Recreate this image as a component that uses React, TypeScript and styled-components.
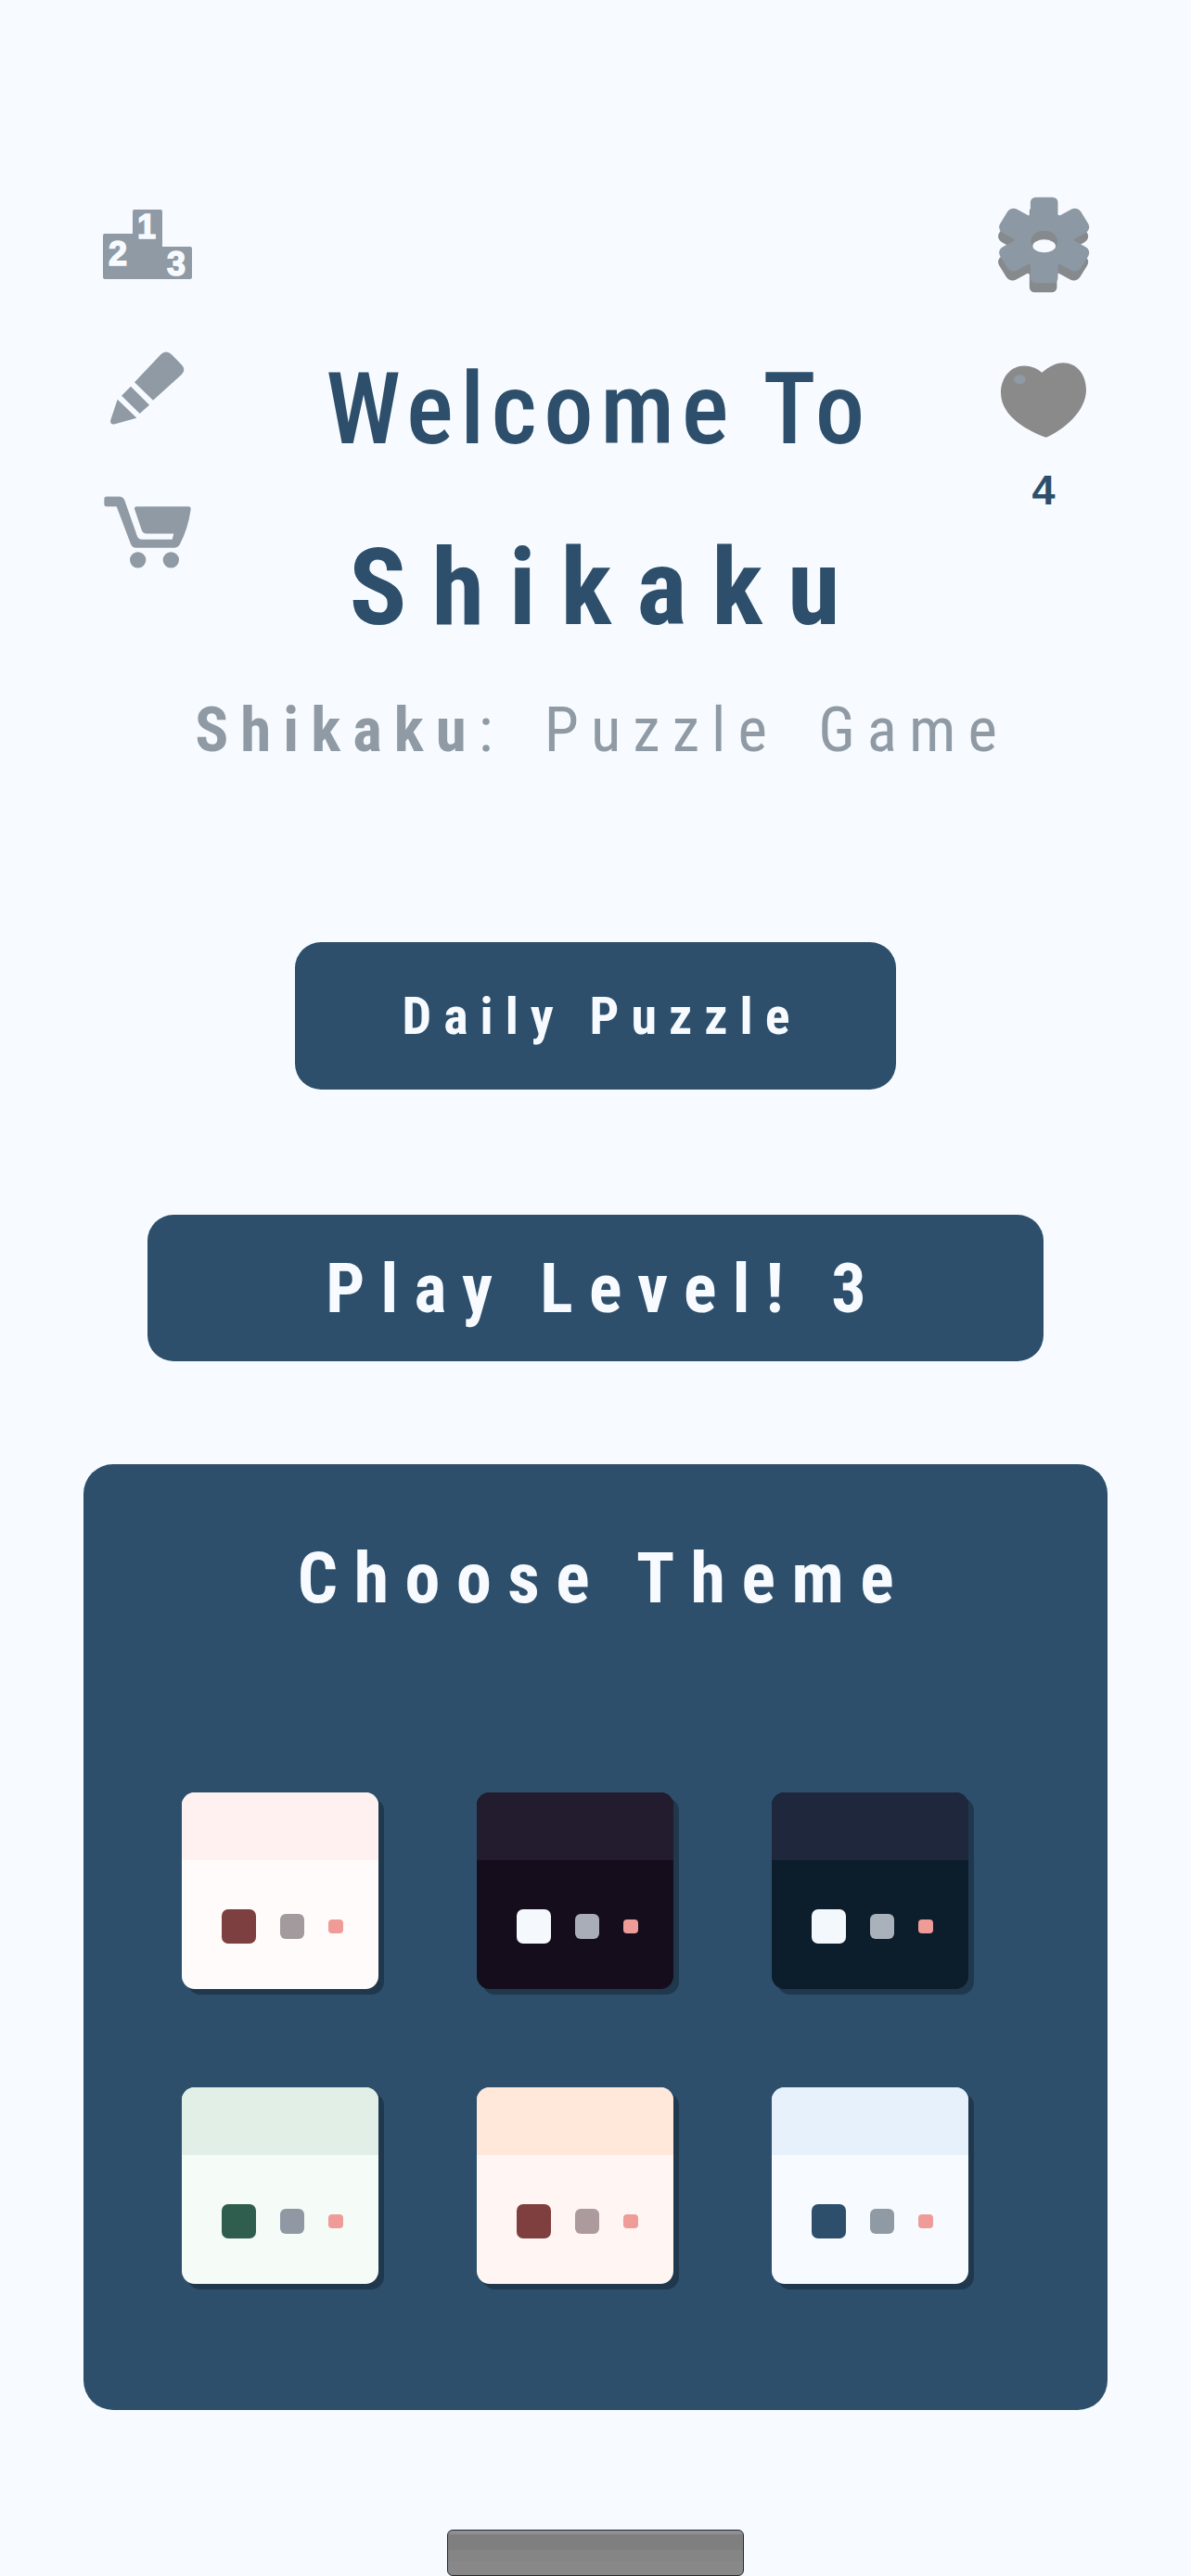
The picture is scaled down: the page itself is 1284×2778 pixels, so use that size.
import styled, { createGlobalStyle } from "styled-components";

const primary = "#2d4f6b";
const muted = "#8f9aa5";
const paper = "#f7fbff";
const font = `"Roboto", "Liberation Sans", sans-serif`;

const GlobalStyle = createGlobalStyle`
  html, body {
    margin: 0;
    padding: 0;
    background: ${paper};
  }
  * {
    box-sizing: border-box;
  }
`;

const Page = styled.main`
  width: 1284px;
  height: 2778px;
  display: flex;
  flex-direction: column;
  align-items: center;
  overflow: hidden;
  font-family: ${font};
  font-stretch: 75%;
  background: ${paper};
`;

const Header = styled.header`
  width: 100%;
  height: 822px;
  display: grid;
  grid-template-columns: 210px minmax(0, 1fr) 209px;
  padding-top: 212px;
`;

const LeftIcons = styled.div`
  display: flex;
  flex-direction: column;
  align-items: flex-start;
  padding: 14px 0 0 111px;
`;

const RightIcons = styled.div`
  display: flex;
  flex-direction: column;
  align-items: center;
  padding-right: 109px;
`;

const IconLink = styled.div<{ $gap?: number; $indent?: number }>`
  display: flex;
  margin-top: ${(p) => p.$gap ?? 0}px;
  margin-left: ${(p) => p.$indent ?? 0}px;
`;

const Lives = styled.span`
  margin-top: 34px;
  font-family: "Liberation Sans", sans-serif;
  font-weight: 700;
  font-size: 45px;
  line-height: 45px;
  color: ${primary};
`;

const TitleBlock = styled.div`
  display: flex;
  flex-direction: column;
  align-items: center;
  padding-top: 178px;
`;

const Welcome = styled.h1`
  margin: 0;
  padding-left: 6px;
  font-size: 107px;
  line-height: 104px;
  font-weight: 500;
  letter-spacing: 7.5px;
  color: ${primary};
  white-space: nowrap;
`;

const GameName = styled.h2`
  margin: 84px 0 0;
  padding-left: 24px;
  font-size: 115px;
  line-height: 112px;
  font-weight: 700;
  letter-spacing: 26.8px;
  color: ${primary};
`;

const Subtitle = styled.p`
  margin: 64px 0 0;
  padding-left: 13px;
  font-size: 67px;
  line-height: 66px;
  font-weight: 400;
  letter-spacing: 13px;
  word-spacing: 14px;
  white-space: nowrap;
  color: ${muted};

  b {
    font-weight: 700;
  }
`;

const ActionButton = styled.button<{ $width: number; $height: number; $size: number; $spacing: number; $top: number }>`
  display: block;
  width: ${(p) => p.$width}px;
  height: ${(p) => p.$height}px;
  margin: ${(p) => p.$top}px 0 0;
  padding: 0 0 0 ${(p) => p.$spacing + 1}px;
  border: 0;
  border-radius: 28px;
  background: ${primary};
  color: ${paper};
  font-family: ${font};
  font-stretch: 75%;
  font-weight: 700;
  font-size: ${(p) => p.$size}px;
  letter-spacing: ${(p) => p.$spacing}px;
  white-space: nowrap;
`;

const ThemePanel = styled.section`
  width: 1104px;
  height: 1020px;
  margin-top: 111px;
  padding: 86px 0 0 106px;
  border-radius: 32px;
  background: ${primary};
`;

const PanelTitle = styled.h3`
  margin: 0 0 0 -106px;
  padding-left: 18px;
  text-align: center;
  font-size: 76px;
  line-height: 75px;
  font-weight: 700;
  letter-spacing: 17.5px;
  color: ${paper};
`;

const ThemeGrid = styled.div`
  display: grid;
  grid-template-columns: repeat(3, 212px);
  grid-auto-rows: 212px;
  gap: 106px;
  margin-top: 193px;
`;

const ThemeCard = styled.button<{ $bg: string }>`
  display: flex;
  flex-direction: column;
  padding: 0;
  border: 0;
  border-radius: 14px;
  overflow: hidden;
  background: ${(p) => p.$bg};
  box-shadow: 6px 6px 0 #1f384d;
`;

const ThemeHead = styled.div<{ $bg: string }>`
  width: 100%;
  height: 73px;
  background: ${(p) => p.$bg};
`;

const SwatchRow = styled.div`
  flex: 1;
  width: 100%;
  display: flex;
  align-items: center;
  justify-content: center;
  gap: 26px;
  padding: 4px 0 0 5px;
`;

const Swatch = styled.span<{ $w: number; $h: number; $bg: string; $r: number }>`
  width: ${(p) => p.$w}px;
  height: ${(p) => p.$h}px;
  border-radius: ${(p) => p.$r}px;
  background: ${(p) => p.$bg};
`;

const HomeBar = styled.div`
  width: 320px;
  height: 50px;
  margin-top: auto;
  border: 1px solid #1e2b42;
  border-radius: 6px;
  background: linear-gradient(#8f8f8f 0 4px, #7f7f7f 4px 21px, #858585 21px 33px, #888888 33px);
`;

const themes = [
  { head: "#fff1f0", body: "#fffbfa", main: "#7d3f3f", mid: "#a29a9d" },
  { head: "#221c2e", body: "#150d1c", main: "#f5f8fc", mid: "#a8adb8" },
  { head: "#1e273b", body: "#0c1d2b", main: "#f3f8fd", mid: "#a9b1bb" },
  { head: "#e1efe6", body: "#f5fbf7", main: "#2f5e4f", mid: "#9099a3" },
  { head: "#ffe8da", body: "#fff6f3", main: "#7f3f3f", mid: "#ac9a9d" },
  { head: "#e6f1fb", body: "#f7fbff", main: "#2d4f6b", mid: "#8f9aa5" },
];

function PodiumIcon() {
  const digit = {
    fill: paper,
    stroke: paper,
    strokeWidth: 1.5,
    fontFamily: "Liberation Sans, sans-serif",
    fontWeight: 700,
    fontSize: 36,
    textAnchor: "middle" as const,
  };
  return (
    <svg width="96" height="75" viewBox="0 0 96 75" overflow="visible">
      <path fill={muted} d="M34 0h28a2 2 0 0 1 2 2v38h30a2 2 0 0 1 2 2v31a2 2 0 0 1-2 2H2a2 2 0 0 1-2-2V28a2 2 0 0 1 2-2h30V2a2 2 0 0 1 2-2z" />
      <text x="47" y="31" {...digit}>1</text>
      <text x="16" y="60" {...digit}>2</text>
      <text x="79" y="71" {...digit}>3</text>
    </svg>
  );
}

function PencilIcon() {
  return (
    <svg width="80" height="79" viewBox="117 597 240 237">
      <path fill={muted} d="M195 697 L280 607 Q297 590 315 607 L347 640 Q363 656 347 672 L255 755 Z" />
      <path fill={muted} d="M183 710 L243 770 L212 798 L153 740 Z" />
      <path fill={muted} d="M140 752 L202 812 L132 832 Q114 836 118 818 Z" />
    </svg>
  );
}

function CartIcon() {
  return (
    <svg width="94" height="78" viewBox="96 1065 282 233">
      <path
        fill={muted}
        d="M103 1066 H145 Q158 1066 163 1078 L203 1192 Q207 1205 220 1205 H317 L322 1186 H235 Q222 1186 218 1174 L195 1106 Q193 1098 203 1098 H370 Q378 1098 377 1108 Q368 1170 342 1220 Q336 1232 322 1232 H200 Q188 1232 183 1220 L137 1098 H105 Q97 1098 97 1090 V1074 Q97 1066 103 1066 Z"
      />
      <circle fill={muted} cx="206" cy="1271" r="26" />
      <circle fill={muted} cx="313" cy="1271" r="26" />
    </svg>
  );
}

function GearShape({ fill, dx, dy }: { fill: string; dx: number; dy: number }) {
  return (
    <g fill={fill} transform={`translate(${dx} ${dy})`}>
      <circle cx="258" cy="205" r="92" />
      <rect x="216" y="67" width="84" height="278" rx="16" />
      {[60, 120].map((angle) => (
        <rect key={angle} x="214" y="62" width="88" height="286" rx="22" transform={`rotate(${angle} 258 205)`} />
      ))}
    </g>
  );
}

function GearIcon() {
  return (
    <svg width="100" height="104" viewBox="114 65 284 312" preserveAspectRatio="none" overflow="visible">
      <GearShape fill="#878a8d" dx={-3} dy={30} />
      <GearShape fill="#8c98a3" dx={0} dy={0} />
      <ellipse cx="258" cy="210" rx="41" ry="35" fill="#878a8d" />
      <ellipse cx="258" cy="225" rx="35" ry="21" fill={paper} />
    </svg>
  );
}

function HeartIcon() {
  return (
    <svg width="92" height="81" viewBox="117 603 276 242">
      <path
        fill="#8a8a8a"
        d="M250 635 C275 612 300 603 318 603 C362 603 393 640 393 690 C393 760 320 820 263 845 C210 825 117 780 117 700 C117 650 150 613 192 613 C215 613 235 622 250 635 Z"
      />
      <ellipse cx="178" cy="657" rx="19" ry="15" fill={muted} />
    </svg>
  );
}

export default function App() {
  return (
    <Page>
      <GlobalStyle />
      <Header>
        <LeftIcons>
          <IconLink>
            <PodiumIcon />
          </IconLink>
          <IconLink $gap={78} $indent={8}>
            <PencilIcon />
          </IconLink>
          <IconLink $gap={77} $indent={1}>
            <CartIcon />
          </IconLink>
        </LeftIcons>
        <TitleBlock>
          <Welcome>Welcome To</Welcome>
          <GameName>Shikaku</GameName>
          <Subtitle>
            <b>Shikaku</b>: Puzzle Game
          </Subtitle>
        </TitleBlock>
        <RightIcons>
          <IconLink>
            <GearIcon />
          </IconLink>
          <IconLink $gap={75}>
            <HeartIcon />
          </IconLink>
          <Lives>4</Lives>
        </RightIcons>
      </Header>
      <ActionButton $width={648} $height={159} $size={56} $spacing={13} $top={194}>
        Daily Puzzle
      </ActionButton>
      <ActionButton $width={966} $height={158} $size={74} $spacing={17.2} $top={135}>
        Play Level! 3
      </ActionButton>
      <ThemePanel>
        <PanelTitle>Choose Theme</PanelTitle>
        <ThemeGrid>
          {themes.map((theme) => (
            <ThemeCard key={theme.head} $bg={theme.body}>
              <ThemeHead $bg={theme.head} />
              <SwatchRow>
                <Swatch $w={37} $h={37} $r={7} $bg={theme.main} />
                <Swatch $w={26} $h={27} $r={6} $bg={theme.mid} />
                <Swatch $w={16} $h={15} $r={4} $bg="#ef9c98" />
              </SwatchRow>
            </ThemeCard>
          ))}
        </ThemeGrid>
      </ThemePanel>
      <HomeBar />
    </Page>
  );
}
